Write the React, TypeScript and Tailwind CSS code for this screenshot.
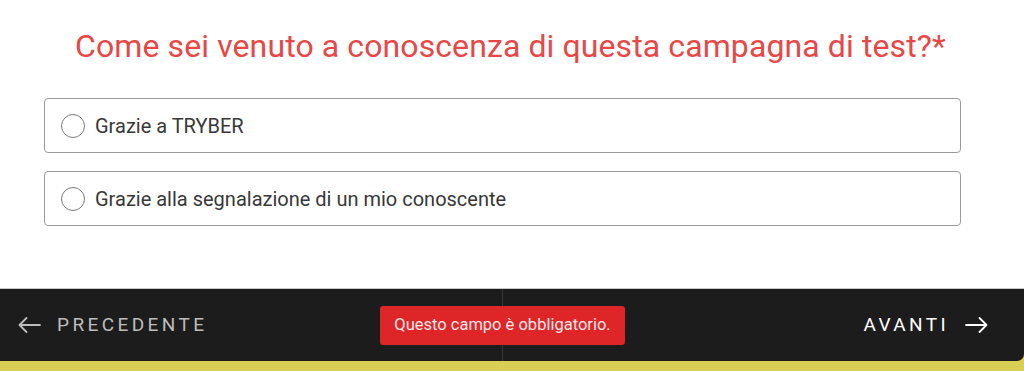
const options = ["Grazie a TRYBER", "Grazie alla segnalazione di un mio conoscente"];

function Arrow({ dir }: { dir: "left" | "right" }) {
  return (
    <svg width="23" height="16" viewBox="0 0 23 16" fill="none" stroke="currentColor" strokeWidth="1.8" strokeLinecap="round" strokeLinejoin="round">
      {dir === "left" ? (
        <path d="M22 8H1.5M8.5 1L1.5 8l7 7" />
      ) : (
        <path d="M1 8h20.5M14.5 1l7 7-7 7" />
      )}
    </svg>
  );
}

function Option({ label }: { label: string }) {
  return (
    <label className="flex h-[55px] items-center gap-[10px] rounded-[4px] border border-[#9a9a9a] pl-[16px]">
      <span className="h-[24px] w-[24px] shrink-0 rounded-full border-[1.5px] border-[#7a7a7a] bg-white" />
      <span className="text-[20px] text-[#383838]">{label}</span>
    </label>
  );
}

export default function App() {
  return (
    <div className="h-[371px] w-[1024px] overflow-hidden bg-white" style={{ fontFamily: "Roboto, 'Liberation Sans', sans-serif" }}>
      <div className="flex h-[288px] flex-col">
        <h1 className="pt-[25px] pl-[75px] text-[32px] leading-[42px] tracking-[0.1px] text-[#e84747]">
          Come sei venuto a conoscenza di questa campagna di test?*
        </h1>
        <div className="ml-[44px] mt-[31px] flex w-[917px] flex-col gap-[18px]">
          {options.map((o) => (
            <Option key={o} label={o} />
          ))}
        </div>
      </div>
      <div className="relative h-[83px] border-t border-[#c8c8c8] bg-[#d9cf57]">
        <div className="flex h-[72px] rounded-br-[7px] bg-[#1c1c1c]">
          <div className="flex w-[503px] items-center gap-[16px] border-r border-[#363636] pl-[18px] text-[#bdbdbd]">
            <Arrow dir="left" />
            <span className="text-[19px] tracking-[3.4px]">PRECEDENTE</span>
          </div>
          <div className="flex flex-1 items-center justify-end gap-[16px] pr-[36px] text-white">
            <span className="text-[19px] tracking-[3.4px]">AVANTI</span>
            <Arrow dir="right" />
          </div>
        </div>
        <div className="absolute top-[17px] left-[380px] flex h-[39px] w-[245px] items-center justify-center rounded-[3px] bg-[#de2528] text-[16.5px] text-[#fde8e8]">
          Questo campo è obbligatorio.
        </div>
      </div>
    </div>
  );
}
